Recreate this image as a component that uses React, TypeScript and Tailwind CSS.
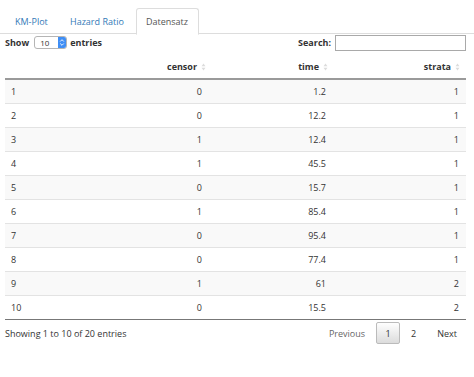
import React from "react";

const rows: [number, number, string, number][] = [
  [1, 0, "1.2", 1],
  [2, 0, "12.2", 1],
  [3, 1, "12.4", 1],
  [4, 1, "45.5", 1],
  [5, 0, "15.7", 1],
  [6, 1, "85.4", 1],
  [7, 0, "95.4", 1],
  [8, 0, "77.4", 1],
  [9, 1, "61", 2],
  [10, 0, "15.5", 2],
];

function SortIcon() {
  return (
    <svg width="5" height="8" viewBox="0 0 5 8" className="ml-[4px] inline-block">
      <path d="M2.5 0.5 L4.5 3.2 L0.5 3.2 Z" fill="#dcdcdc" />
      <path d="M2.5 7.5 L4.5 4.8 L0.5 4.8 Z" fill="#dcdcdc" />
    </svg>
  );
}

const cols = "grid grid-cols-[100px_108px_121px_132px]";

export default function App() {
  return (
    <div className="w-[474px] h-[377px] bg-white text-[9px] text-[#333] font-['Open_Sans',sans-serif] leading-none">
      {/* Tabs */}
      <div className="pt-[8px]">
        <div className="flex h-[26px] border-b border-[#ddd] pl-[4px]">
          <div className="w-[55px] pl-[11px] h-[26px] flex items-center text-[#337ab7]">KM-Plot</div>
          <div className="w-[76px] pl-[11px] h-[26px] flex items-center text-[#337ab7]">Hazard Ratio</div>
          <div className="ml-[1px] w-[63px] pl-[9px] h-[27px] flex items-center bg-white border border-[#ddd] border-b-white rounded-t-[3px] text-[#555]">
            Datensatz
          </div>
        </div>
      </div>

      {/* Controls */}
      <div className="flex items-center justify-between pl-[5px] pr-[8px] h-[17px]">
        <div className="flex items-center font-bold">
          <span>Show</span>
          <div className="ml-[5px] w-[33px] h-[13px] border border-[#b5b5b5] rounded-[3px] flex items-center bg-white overflow-hidden">
            <span className="pl-[5px] text-[8px] font-normal flex-1">10</span>
            <div className="w-[8px] h-[13px] bg-[#3f8ef5] flex flex-col items-center justify-center rounded-r-[2px]">
              <svg width="6" height="9" viewBox="0 0 6 9">
                <path d="M1.2 3.5 L3 1.7 L4.8 3.5" stroke="white" strokeWidth="0.9" fill="none" />
                <path d="M1.2 5.5 L3 7.3 L4.8 5.5" stroke="white" strokeWidth="0.9" fill="none" />
              </svg>
            </div>
          </div>
          <span className="ml-[3px]">entries</span>
        </div>
        <div className="flex items-center font-bold">
          <span>Search:</span>
          <div className="ml-[4px] w-[131px] h-[16px] border border-[#a9a9a9] bg-white" />
        </div>
      </div>

      {/* Table */}
      <div className="ml-[5px] w-[461px]">
        <div className={`${cols} h-[29px] items-end pb-[7px] font-bold border-b-2 border-[#9a9a9a]`}>
          <div className="pl-[6px]"></div>
          <div className="flex items-center justify-end pr-[7px]">censor<SortIcon /></div>
          <div className="flex items-center justify-end pr-[6px]">time<SortIcon /></div>
          <div className="flex items-center justify-end pr-[6px]">strata<SortIcon /></div>
        </div>
        {rows.map((r, i) => (
          <div
            key={r[0]}
            className={`${cols} h-[24px] items-center ${i % 2 === 0 ? "bg-[#f9f9f9]" : "bg-white"} ${
              i === rows.length - 1 ? "border-b border-[#777]" : "border-b border-[#e3e3e3]"
            }`}
          >
            <div className="pl-[6px]">{r[0]}</div>
            <div className="text-right pr-[11px]">{r[1]}</div>
            <div className="text-right pr-[8px]">{r[2]}</div>
            <div className="text-right pr-[7px]">{r[3]}</div>
          </div>
        ))}
      </div>

      {/* Footer */}
      <div className="flex items-center justify-between pl-[5px] pr-[17px] mt-[2px] h-[22px]">
        <span>Showing 1 to 10 of 20 entries</span>
        <div className="flex items-center">
          <span className="text-[#666]">Previous</span>
          <div className="ml-[11px] w-[24px] h-[22px] flex items-center justify-center border border-[#bbb] rounded-[2px] bg-gradient-to-b from-[#fefefe] to-[#dcdcdc]">
            1
          </div>
          <span className="ml-[11px]">2</span>
          <span className="ml-[21px]">Next</span>
        </div>
      </div>
    </div>
  );
}
